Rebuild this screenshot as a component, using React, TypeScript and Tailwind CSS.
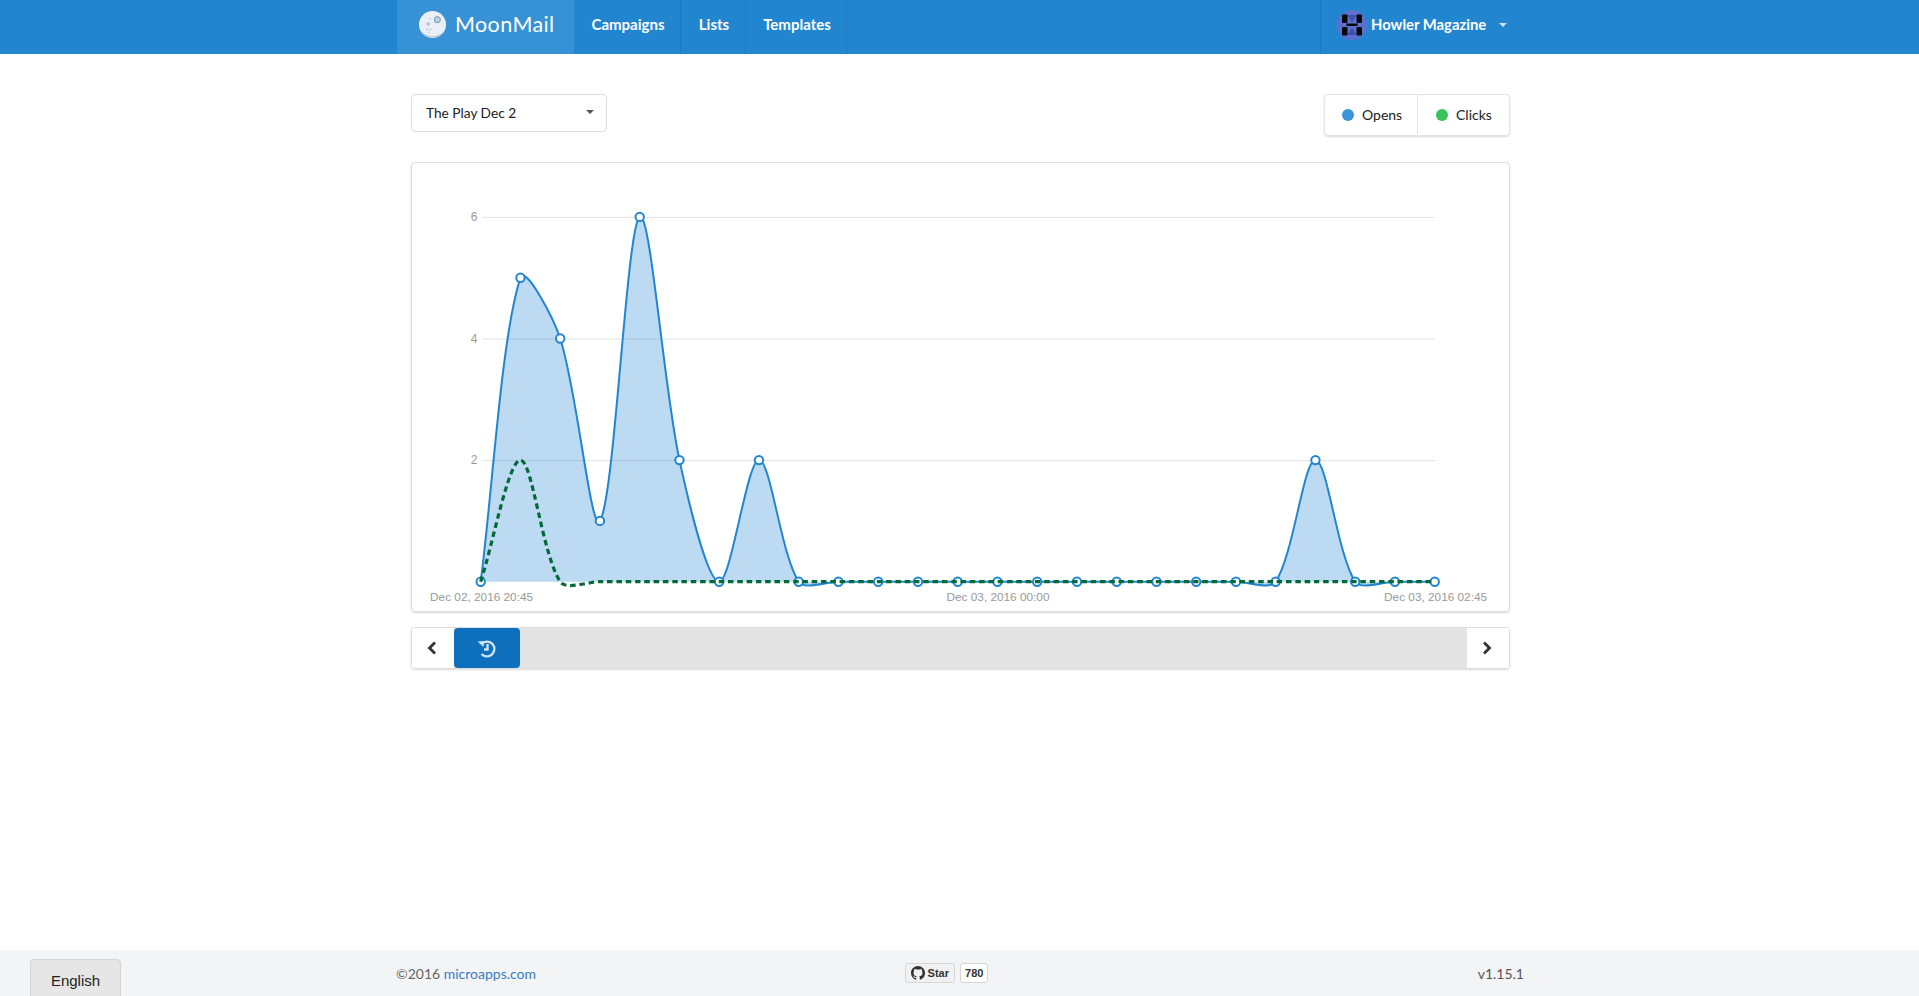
const OPENS = [0, 5, 4, 1, 6, 2, 0, 2, 0, 0, 0, 0, 0, 0, 0, 0, 0, 0, 0, 0, 0, 2, 0, 0, 0];
const CLICKS = [0, 2, 0, 0, 0, 0, 0, 0, 0, 0, 0, 0, 0, 0, 0, 0, 0, 0, 0, 0, 0, 0, 0, 0, 0];

const X0 = 68.7;
const STEP = 39.75;
const Y0 = 418.7;
const UNIT = 60.8;
const TENSION = 0.3;

type Pt = [number, number];

const toPoints = (values: number[]): Pt[] =>
  values.map((v, i) => [X0 + i * STEP, Y0 - v * UNIT]);

// distance weighted spline, keeps the peaks close to the data points
function spline(pts: Pt[]) {
  const ctrl = pts.map((cur, i) => {
    const prev = pts[i - 1] ?? cur;
    const next = pts[i + 1] ?? cur;
    const d01 = Math.hypot(cur[0] - prev[0], cur[1] - prev[1]);
    const d12 = Math.hypot(next[0] - cur[0], next[1] - cur[1]);
    const fa = (TENSION * d01) / (d01 + d12);
    const fb = (TENSION * d12) / (d01 + d12);
    return {
      in: [cur[0] - fa * (next[0] - prev[0]), cur[1] - fa * (next[1] - prev[1])],
      out: [cur[0] + fb * (next[0] - prev[0]), cur[1] + fb * (next[1] - prev[1])],
    };
  });
  let d = `M${pts[0][0]},${pts[0][1]}`;
  for (let i = 1; i < pts.length; i++) {
    d += `C${ctrl[i - 1].out[0]},${ctrl[i - 1].out[1]},${ctrl[i].in[0]},${ctrl[i].in[1]},${pts[i][0]},${pts[i][1]}`;
  }
  return d;
}

const AXIS_FONT = "'Liberation Sans', sans-serif";

function Chart() {
  const opens = toPoints(OPENS);
  const clicks = toPoints(CLICKS);
  const line = spline(opens);
  return (
    <svg viewBox="0 0 1097 448" className="block h-[448px] w-[1097px]">
      {[6, 4, 2].map((v) => (
        <g key={v}>
          <line x1={70} x2={1023} y1={Y0 - v * UNIT + 0.5} y2={Y0 - v * UNIT + 0.5} stroke="#e3e3e3" strokeWidth={1} />
          <text x={65.5} y={Y0 - v * UNIT + 4} textAnchor="end" fontSize={12} fill="#999" fontFamily={AXIS_FONT}>
            {v}
          </text>
        </g>
      ))}
      <path d={`${line}L${X0 + 24 * STEP},${Y0}L${X0},${Y0}Z`} fill="#2185d0" fillOpacity={0.3} />
      <path d={line} fill="none" stroke="#2185d0" strokeWidth={2} />
      {opens.map(([x, y], i) => (
        <circle key={i} cx={x} cy={y} r={4.2} fill="#fff" stroke="#2185d0" strokeWidth={2} />
      ))}
      <path d={spline(clicks)} fill="none" stroke="#00693a" strokeWidth={3.2} strokeDasharray="5.5 3.8" />
      <text x={69.6} y={438} textAnchor="middle" fontSize={11.8} fill="#999" fontFamily={AXIS_FONT}>
        Dec 02, 2016 20:45
      </text>
      <text x={586} y={438} textAnchor="middle" fontSize={11.8} fill="#999" fontFamily={AXIS_FONT}>
        Dec 03, 2016 00:00
      </text>
      <text x={1023.6} y={438} textAnchor="middle" fontSize={11.8} fill="#999" fontFamily={AXIS_FONT}>
        Dec 03, 2016 02:45
      </text>
    </svg>
  );
}

function MoonLogo() {
  return (
    <svg viewBox="0 0 30 30" className="h-[29px] w-[29px]">
      <circle cx="15" cy="15" r="14" fill="#e9eff4" />
      <path d="M3 21.5a14 14 0 0 0 24 .5a16 16 0 0 1-24-.5z" fill="#b4c6d6" />
      <circle cx="20" cy="10" r="3.2" fill="#b9cfdf" stroke="#7396b1" strokeWidth="1" />
      <circle cx="10.5" cy="14.5" r="1.7" fill="#a9bfd0" />
      <circle cx="12.5" cy="9" r="0.8" fill="#a9bfd0" />
      <circle cx="9.5" cy="20" r="0.9" fill="#a9bfd0" />
      <circle cx="13" cy="20" r="0.9" fill="#a9bfd0" />
      <circle cx="11" cy="23" r="0.8" fill="#a9bfd0" />
    </svg>
  );
}

function HowlerAvatar() {
  return (
    <svg viewBox="0 0 30 30" className="h-[30px] w-[30px]">
      <circle cx="15" cy="15" r="15" fill="#5d70cf" />
      <path d="M10 5h10l-5 7zM10 25h10l-5-7z" fill="#3f51ad" />
      <rect x="5" y="4.5" width="5.5" height="8.5" rx="1" fill="#0a0a0a" />
      <rect x="19.5" y="4.5" width="5.5" height="8.5" rx="1" fill="#0a0a0a" />
      <rect x="5" y="17" width="5.5" height="8.5" rx="1" fill="#0a0a0a" />
      <rect x="19.5" y="17" width="5.5" height="8.5" rx="1" fill="#0a0a0a" />
      <rect x="9.5" y="13.5" width="11" height="2.5" fill="#0a0a0a" />
    </svg>
  );
}

export default function App() {
  return (
    <div className="relative flex min-h-[996px] flex-col overflow-hidden bg-white font-['Lato',sans-serif] text-[14px] text-[#212121]">
      {/* Top menu */}
      <header className="h-[54px] bg-[#2185d0] text-white">
        <div className="mx-auto flex h-full w-[1127px] items-stretch">
          <a className="ml-px flex w-[177px] items-center gap-[8px] bg-[#3791d5] pb-[5px] pl-[21px] text-[21.5px] tracking-[0.4px]">
            <MoonLogo />
            <span>MoonMail</span>
          </a>
          {["Campaigns", "Lists", "Templates"].map((item, i) => (
            <a
              key={item}
              className={`flex items-center justify-center border-r border-[#1f78bd] pb-[5px] pl-[2px] text-[15px] font-bold ${
                i === 0 ? "w-[107px]" : i === 1 ? "w-[65px]" : "w-[101px]"
              }`}
            >
              {item}
            </a>
          ))}
          <div className="ml-auto flex w-[203px] items-center border-l border-[#1f78bd] pb-[5px] pl-[16px]">
            <HowlerAvatar />
            <span className="ml-[4px] text-[14.8px] font-bold">Howler Magazine</span>
            <span className="ml-[13px] h-0 w-0 border-x-[4px] border-t-[4px] border-x-transparent border-t-[#cfe4f4]" />
          </div>
        </div>
      </header>

      <main className="mx-auto w-[1127px] pl-[15px] pr-[13px] pt-[40px]">
        <div className="flex items-start justify-between">
          <div className="flex h-[38px] w-[196px] items-center justify-between rounded-[4px] border border-[#dedede] pl-[14px] pr-[12px]">
            <span className="text-[13.7px]">The Play Dec 2</span>
            <span className="mb-[3px] h-0 w-0 border-x-[4px] border-t-[4px] border-x-transparent border-t-[#555]" />
          </div>
          <div className="flex h-[42px] w-[186px] rounded-[4px] border border-[#e3e3e3] pb-px shadow-[0_1px_2px_rgba(0,0,0,0.15)]">
            <div className="flex w-[93px] items-center gap-[8px] border-r border-[#e3e3e3] pl-[17px]">
              <span className="h-[12px] w-[12px] rounded-full bg-[#3b93d8]" />
              Opens
            </div>
            <div className="flex flex-1 items-center gap-[8px] pl-[18px]">
              <span className="h-[12px] w-[12px] rounded-full bg-[#39c25a]" />
              Clicks
            </div>
          </div>
        </div>

        <div className="mt-[26px] h-[450px] w-[1099px] rounded-[4px] border border-[#dedede] shadow-[0_1px_2px_rgba(0,0,0,0.15)]">
          <Chart />
        </div>

        <div className="mt-[15px] flex h-[42px] w-[1099px] overflow-hidden rounded-[4px] border border-[#dedede] shadow-[0_1px_2px_rgba(0,0,0,0.15)]">
          <button className="flex w-[42px] items-center justify-center bg-white pb-[1px] pr-[2px] text-[#333]">
            <svg viewBox="0 0 10 14" className="h-[14px] w-[10px]" fill="none" stroke="currentColor" strokeWidth="2.8">
              <path d="M8 1.5 2.5 7 8 12.5" />
            </svg>
          </button>
          <div className="flex flex-1 bg-[#e4e4e4]">
            <button className="flex w-[66px] items-center justify-center rounded-[4px] bg-[#0e70bd] pr-[2px] text-[#cfe2f1]">
              <svg viewBox="0 0 20 20" className="h-[20px] w-[20px]" fill="none" stroke="currentColor" strokeWidth="2.4">
                <path d="M1.5 3.5 8 3l-.5 6z" fill="currentColor" stroke="none" />
                <path d="M5.5 6A7.4 7.4 0 1 1 5.5 16" />
                <path d="M11.5 6v5.5H8" />
              </svg>
            </button>
          </div>
          <button className="flex w-[42px] items-center justify-center bg-white pb-[1px] pr-[2px] text-[#333]">
            <svg viewBox="0 0 10 14" className="h-[14px] w-[10px]" fill="none" stroke="currentColor" strokeWidth="2.8">
              <path d="M2 1.5 7.5 7 2 12.5" />
            </svg>
          </button>
        </div>
      </main>

      {/* Footer */}
      <footer className="relative mt-auto h-[46px] bg-[#f3f4f5]">
        <button className="absolute left-[30px] top-[9px] h-[50px] w-[91px] rounded-t-[4px] border border-[#d4d4d4] bg-[#e6e6e6] pb-[6px] font-['Liberation_Sans',sans-serif] text-[15px] text-[#222]">
          English
        </button>
        <div className="mx-auto grid h-full w-[1127px] grid-cols-3 items-center text-[14px] text-[#666]">
          <div>
            ©2016 <a className="text-[#3a7cc4]">microapps.com</a>
          </div>
          <div className="flex items-center justify-center pr-[26px] font-['Liberation_Sans',sans-serif] text-[11px] font-bold text-[#333]">
            <span className="flex h-[20px] items-center gap-[3px] rounded-[3px] border border-[#d5d5d5] bg-[#f1f1f1] px-[5px]">
              <svg viewBox="0 0 16 16" className="h-[14px] w-[14px]" fill="currentColor">
                <path d="M8 0C3.58 0 0 3.58 0 8c0 3.54 2.29 6.53 5.47 7.59.4.07.55-.17.55-.38 0-.19-.01-.82-.01-1.49-2.01.37-2.53-.49-2.69-.94-.09-.23-.48-.94-.82-1.13-.28-.15-.68-.52-.01-.53.63-.01 1.08.58 1.23.82.72 1.21 1.87.87 2.33.66.07-.52.28-.87.51-1.07-1.78-.2-3.64-.89-3.64-3.95 0-.87.31-1.59.82-2.15-.08-.2-.36-1.02.08-2.12 0 0 .67-.21 2.2.82.64-.18 1.32-.27 2-.27s1.36.09 2 .27c1.53-1.04 2.2-.82 2.2-.82.44 1.1.16 1.92.08 2.12.51.56.82 1.27.82 2.15 0 3.07-1.87 3.75-3.65 3.95.29.25.54.73.54 1.48 0 1.07-.01 1.93-.01 2.2 0 .21.15.46.55.38A8.01 8.01 0 0 0 16 8c0-4.42-3.58-8-8-8z" />
              </svg>
              Star
            </span>
            <span className="ml-[5px] flex h-[20px] items-center rounded-[3px] border border-[#d5d5d5] bg-white px-[4px]">780</span>
          </div>
          <div className="-mr-px text-right text-[#555]">v1.15.1</div>
        </div>
      </footer>
    </div>
  );
}
